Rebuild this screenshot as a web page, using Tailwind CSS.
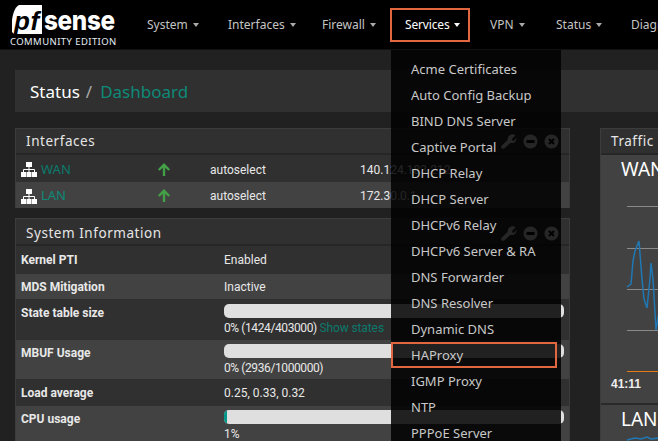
<!DOCTYPE html>
<html lang="en">
<head>
<meta charset="utf-8">
<title>pfSense Dashboard</title>
<script src="https://cdn.jsdelivr.net/npm/@tailwindcss/browser@4"></script>
</head>
<body class="bg-[#212121] font-['Roboto',sans-serif] text-[12px] text-[#e8e8e8]">
<div class="relative w-[658px] h-[441px] overflow-hidden">
  <!-- navbar -->
  <nav class="h-[50px] bg-black flex items-center border-b border-[#111] font-['Noto_Sans',sans-serif]">
    <div class="w-[147px] shrink-0 h-full relative">
      <svg class="absolute left-[12px] top-[5px]" width="31" height="30" viewBox="0 0 31 30"><path d="M7 0H30V29H2L0 27V15C1 8 3 2 7 0Z" fill="#fff"/></svg>
      <span class="absolute left-[14px] top-[6px] font-['Liberation_Sans',sans-serif] font-bold italic text-[26px] leading-[30px] text-black tracking-[0.5px]">pf</span>
      <span class="absolute left-[44px] top-[3px] origin-left scale-x-[0.9] font-['Inter',sans-serif] font-extrabold text-[27px] leading-[36px] text-white tracking-[-0.4px]">sense</span>
      <span class="absolute left-[10px] top-[35px] font-['Noto_Sans',sans-serif] text-[9.5px] leading-[13px] text-[#e4eef6] tracking-[0.42px] whitespace-nowrap">COMMUNITY EDITION</span>
    </div>
    <div class="flex items-center gap-[30px] whitespace-nowrap text-[12px] text-[#c4c4c4]">
      <span class="w-[51px] flex items-center gap-[5px]">System <i class="border-x-[3.5px] border-t-4 border-x-transparent border-t-[#aaa]"></i></span>
      <span class="w-[64px] flex items-center gap-[5px]">Interfaces <i class="border-x-[3.5px] border-t-4 border-x-transparent border-t-[#aaa]"></i></span>
      <span class="w-[53px] flex items-center gap-[5px]">Firewall <i class="border-x-[3.5px] border-t-4 border-x-transparent border-t-[#aaa]"></i></span>
      <span class="w-[55px] flex items-center gap-[4px] text-white tracking-[-0.15px]">Services <i class="border-x-[3.5px] border-t-4 border-x-transparent border-t-white"></i></span>
      <span class="w-[36px] flex items-center gap-[5px]">VPN <i class="border-x-[3.5px] border-t-4 border-x-transparent border-t-[#aaa]"></i></span>
      <span class="w-[45px] flex items-center gap-[5px]">Status <i class="border-x-[3.5px] border-t-4 border-x-transparent border-t-[#aaa]"></i></span>
      <span>Diagnostics</span>
    </div>
  </nav>

  <!-- main -->
  <main class="pl-[15px] pt-[20px]">
    <div class="h-[42px] w-[700px] bg-[#303030] flex items-center pl-[15px] text-[17px] leading-none font-['Noto_Sans',sans-serif]">
      <span class="text-white">Status</span>
      <span class="text-[#aaa] ml-[6px] mr-[8px]">/</span>
      <span class="text-[#0d8a78]">Dashboard</span>
    </div>

    <div class="flex gap-[30px] mt-[16px] w-[800px]">
      <!-- left column -->
      <div class="w-[555px] shrink-0 flex flex-col gap-[10px]">
        <section class="border-t border-x border-[#3c3c3c] bg-[#303030]">
          <header class="h-[26px] flex items-center justify-between px-[10px] pt-[1px] border-b-2 border-[#262626] font-['Noto_Sans',sans-serif] text-[13.5px] tracking-[0.55px] text-[#e6e6e6]">
            <span>Interfaces</span>
            <span class="flex items-center gap-[6px]">
              <svg width="16" height="15" viewBox="0 0 16 15"><path d="M14.5 1.5 11 4.8 11.3 6.5 13 7 15.5 3.8C15.8 6.5 14 9 11 9 10.4 9 9.9 8.9 9.5 8.7L3.5 14.3C2.8 15 1.2 14.9.7 14.2.1 13.6 0 12.4.8 11.6L6.8 5.8C6.2 2.8 9 -.4 12.5.2Z" fill="#fff"/></svg>
              <svg width="15" height="15" viewBox="0 0 15 15"><circle cx="7.5" cy="7.5" r="7" fill="#fff"/><rect x="3.5" y="6" width="8" height="3" fill="#000"/></svg>
              <svg width="15" height="15" viewBox="0 0 15 15"><circle cx="7.5" cy="7.5" r="7" fill="#fff"/><path d="M5 5 10 10M10 5 5 10" stroke="#000" stroke-width="2"/></svg>
            </span>
          </header>
          <div class="h-[27px] flex items-center bg-[#303030] pt-[2px]">
            <svg class="ml-[4px] mr-[3px] shrink-0" width="18" height="15" viewBox="0 0 18 15"><path d="M6 0H12V5H6ZM1 10H6V15H1ZM6.500 10H11.500V15H6.500ZM12 10H17V15H12Z" fill="#fff"/><path d="M3.500 10V7.500H14.500V10M9 5V10" stroke="#fff" fill="none"/></svg>
            <span class="w-[116px] text-[13px] text-[#0b7a6c] font-['Noto_Sans',sans-serif]">WAN</span>
            <svg class="shrink-0 mr-[39px]" width="14" height="14" viewBox="0 0 14 14"><path d="M7 13V2M1.800 7 7 1.800 12.200 7" stroke="#43a047" stroke-width="2.400" fill="none"/></svg>
            <span class="w-[150px]">autoselect</span>
            <span>140.124.183.212</span>
          </div>
          <div class="h-[26px] flex items-center bg-[#424242] pt-[2px]">
            <svg class="ml-[4px] mr-[3px] shrink-0" width="18" height="15" viewBox="0 0 18 15"><path d="M6 0H12V5H6ZM1 10H6V15H1ZM6.500 10H11.500V15H6.500ZM12 10H17V15H12Z" fill="#fff"/><path d="M3.500 10V7.500H14.500V10M9 5V10" stroke="#fff" fill="none"/></svg>
            <span class="w-[116px] text-[13px] text-[#0d8a78] font-['Noto_Sans',sans-serif]">LAN</span>
            <svg class="shrink-0 mr-[39px]" width="14" height="14" viewBox="0 0 14 14"><path d="M7 13V2M1.800 7 7 1.800 12.200 7" stroke="#43a047" stroke-width="2.400" fill="none"/></svg>
            <span class="w-[150px]">autoselect</span>
            <span>172.30.0.1</span>
          </div>
        </section>

        <section class="border-t border-x border-[#3c3c3c] bg-[#303030]">
          <header class="h-[27px] flex items-center justify-between px-[10px] pt-[3px] border-b-2 border-[#262626] font-['Noto_Sans',sans-serif] text-[13.5px] tracking-[0.55px] text-[#e6e6e6]">
            <span>System Information</span>
            <span class="flex items-center gap-[6px]">
              <svg width="16" height="15" viewBox="0 0 16 15"><path d="M14.5 1.5 11 4.8 11.3 6.5 13 7 15.5 3.8C15.8 6.5 14 9 11 9 10.4 9 9.9 8.9 9.5 8.7L3.5 14.3C2.8 15 1.2 14.9.7 14.2.1 13.6 0 12.4.8 11.6L6.8 5.8C6.2 2.8 9 -.4 12.5.2Z" fill="#fff"/></svg>
              <svg width="15" height="15" viewBox="0 0 15 15"><circle cx="7.5" cy="7.5" r="7" fill="#fff"/><rect x="3.5" y="6" width="8" height="3" fill="#000"/></svg>
              <svg width="15" height="15" viewBox="0 0 15 15"><circle cx="7.5" cy="7.5" r="7" fill="#fff"/><path d="M5 5 10 10M10 5 5 10" stroke="#000" stroke-width="2"/></svg>
            </span>
          </header>
          <div class="h-[28px] flex items-center bg-[#303030]">
            <b class="w-[208px] pl-[5px] font-bold">Kernel PTI</b><span>Enabled</span>
          </div>
          <div class="h-[25px] flex items-center bg-[#424242]">
            <b class="w-[208px] pl-[5px] font-bold">MDS Mitigation</b><span>Inactive</span>
          </div>
          <div class="h-[41px] flex bg-[#303030] pt-[5px]">
            <b class="w-[208px] pl-[5px] font-bold leading-[19px]">State table size</b>
            <div class="w-[340px]">
              <div class="h-[14px] rounded-[5px] bg-[#dfdfdf]"></div>
              <p class="leading-[20px] tracking-[-0.4px]">0% (1424/403000) <span class="text-[#0b7a6c] tracking-[-0.1px]">Show states</span></p>
            </div>
          </div>
          <div class="h-[39px] flex bg-[#424242] pt-[4px]">
            <b class="w-[208px] pl-[5px] font-bold leading-[19px]">MBUF Usage</b>
            <div class="w-[340px]">
              <div class="h-[14px] rounded-[5px] bg-[#dfdfdf]"></div>
              <p class="leading-[20px] tracking-[-0.4px]">0% (2936/1000000)</p>
            </div>
          </div>
          <div class="h-[27px] flex items-center bg-[#303030]">
            <b class="w-[208px] pl-[5px] font-bold">Load average</b><span>0.25, 0.33, 0.32</span>
          </div>
          <div class="h-[40px] flex bg-[#424242] pt-[4px]">
            <b class="w-[208px] pl-[5px] font-bold leading-[19px]">CPU usage</b>
            <div class="w-[340px]">
              <div class="h-[14px] rounded-[5px] bg-[#dfdfdf] overflow-hidden"><div class="h-full w-[3px] bg-[#009688]"></div></div>
              <p class="leading-[20px]">1%</p>
            </div>
          </div>
        </section>
      </div>

      <!-- right column -->
      <section class="w-[200px] shrink-0 border-t border-l border-[#3c3c3c] bg-[#424242] h-[320px] font-['Noto_Sans',sans-serif]">
        <header class="h-[26px] flex items-center pl-[10px] pt-[1px] bg-[#303030] border-b-2 border-[#262626] text-[13.5px] tracking-[0.55px] text-[#e6e6e6]">Traffic Graphs</header>
        <div class="h-[248px] relative">
          <div class="pl-[20px] pt-[2px] text-[19px] leading-[24px] text-white">WAN</div>
          <svg class="absolute left-0 top-0" width="60" height="249" viewBox="600 156 60 249">
            <path d="M626 207.500H660M626 249.500H660M626 290.500H660M626 331.500H660" stroke="#8a8a8a" stroke-width="1" fill="none"/>
            <path d="M626 372.500H660" stroke="#e67a10" stroke-width="1" fill="none"/>
            <path d="M626 288 630 285 632 262 634 252 638 242 641 280 643 300 646 309 649 280 650 264 652 280 655 331 658 313" stroke="#1f78b4" stroke-width="1.500" fill="none"/>
          </svg>
          <div class="absolute left-[10px] top-[222px] font-['Liberation_Sans',sans-serif] font-bold text-[12px] leading-[14px] text-[#eee]">41:11</div>
        </div>
        <div class="border-t-2 border-[#2a2a2a] relative">
          <div class="pl-[20px] pt-[2px] text-[19px] leading-[24px] text-white">LAN</div>
          <svg class="absolute left-0 top-[24px]" width="60" height="12" viewBox="0 0 60 12"><path d="M26 11 34 9 40 10 46 8 50 10 58 9" stroke="#1f78b4" stroke-width="1.500" fill="none"/></svg>
        </div>
      </section>
    </div>
  </main>

  <!-- Services highlight -->
  <div class="absolute left-[390px] top-[8px] w-[80px] h-[34px] border-2 border-[#e0673f]"></div>

  <!-- dropdown -->
  <ul class="absolute left-[391px] top-[50px] w-[170px] h-[391px] bg-black/85 pt-[6px] font-['Noto_Sans',sans-serif] text-[13px] text-[#c8c8c8] whitespace-nowrap">
    <li class="h-[26px] pl-[20px] leading-[26px]">Acme Certificates</li>
    <li class="h-[26px] pl-[20px] leading-[26px]">Auto Config Backup</li>
    <li class="h-[26px] pl-[20px] leading-[26px]">BIND DNS Server</li>
    <li class="h-[26px] pl-[20px] leading-[26px]">Captive Portal</li>
    <li class="h-[26px] pl-[20px] leading-[26px]">DHCP Relay</li>
    <li class="h-[26px] pl-[20px] leading-[26px]">DHCP Server</li>
    <li class="h-[26px] pl-[20px] leading-[26px]">DHCPv6 Relay</li>
    <li class="h-[26px] pl-[20px] leading-[26px]">DHCPv6 Server &amp; RA</li>
    <li class="h-[26px] pl-[20px] leading-[26px]">DNS Forwarder</li>
    <li class="h-[26px] pl-[20px] leading-[26px]">DNS Resolver</li>
    <li class="h-[26px] pl-[20px] leading-[26px]">Dynamic DNS</li>
    <li class="h-[26px] w-[166px] pl-[18px] leading-[22px] border-2 border-[#e0673f]">HAProxy</li>
    <li class="h-[26px] pl-[20px] leading-[26px]">IGMP Proxy</li>
    <li class="h-[26px] pl-[20px] leading-[26px]">NTP</li>
    <li class="h-[26px] pl-[20px] leading-[26px]">PPPoE Server</li>
  </ul>
</div>
</body>
</html>
